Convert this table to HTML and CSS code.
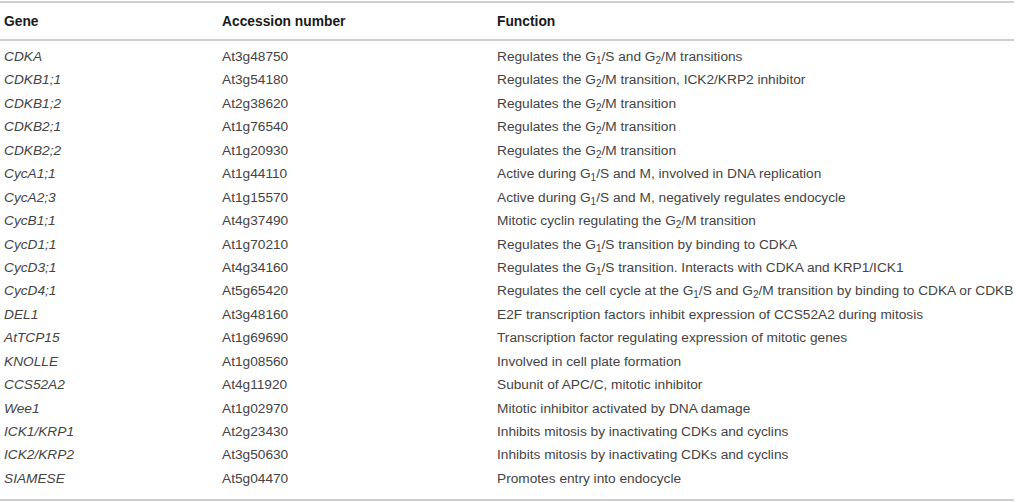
FILE: index.html
```html
<!DOCTYPE html>
<html>
<head>
<meta charset="utf-8">
<link rel="stylesheet" href="styles.css">
</head>
<body>
<table class="genes">
  <thead>
    <tr><th class="c1">Gene</th><th class="c2">Accession number</th><th class="c3">Function</th></tr>
  </thead>
  <tbody>
    <tr class="first"><td class="gene">CDKA</td><td>At3g48750</td><td>Regulates the G<sub>1</sub>/S and G<sub>2</sub>/M transitions</td></tr>
    <tr><td class="gene">CDKB1;1</td><td>At3g54180</td><td>Regulates the G<sub>2</sub>/M transition, ICK2/KRP2 inhibitor</td></tr>
    <tr><td class="gene">CDKB1;2</td><td>At2g38620</td><td>Regulates the G<sub>2</sub>/M transition</td></tr>
    <tr><td class="gene">CDKB2;1</td><td>At1g76540</td><td>Regulates the G<sub>2</sub>/M transition</td></tr>
    <tr><td class="gene">CDKB2;2</td><td>At1g20930</td><td>Regulates the G<sub>2</sub>/M transition</td></tr>
    <tr><td class="gene">CycA1;1</td><td>At1g44110</td><td>Active during G<sub>1</sub>/S and M, involved in DNA replication</td></tr>
    <tr><td class="gene">CycA2;3</td><td>At1g15570</td><td>Active during G<sub>1</sub>/S and M, negatively regulates endocycle</td></tr>
    <tr><td class="gene">CycB1;1</td><td>At4g37490</td><td>Mitotic cyclin regulating the G<sub>2</sub>/M transition</td></tr>
    <tr><td class="gene">CycD1;1</td><td>At1g70210</td><td>Regulates the G<sub>1</sub>/S transition by binding to CDKA</td></tr>
    <tr><td class="gene">CycD3;1</td><td>At4g34160</td><td>Regulates the G<sub>1</sub>/S transition. Interacts with CDKA and KRP1/ICK1</td></tr>
    <tr><td class="gene">CycD4;1</td><td>At5g65420</td><td>Regulates the cell cycle at the G<sub>1</sub>/S and G<sub>2</sub>/M transition by binding to CDKA or CDKB</td></tr>
    <tr><td class="gene">DEL1</td><td>At3g48160</td><td>E2F transcription factors inhibit expression of CCS52A2 during mitosis</td></tr>
    <tr><td class="gene">AtTCP15</td><td>At1g69690</td><td>Transcription factor regulating expression of mitotic genes</td></tr>
    <tr><td class="gene">KNOLLE</td><td>At1g08560</td><td>Involved in cell plate formation</td></tr>
    <tr><td class="gene">CCS52A2</td><td>At4g11920</td><td>Subunit of APC/C, mitotic inhibitor</td></tr>
    <tr><td class="gene">Wee1</td><td>At1g02970</td><td>Mitotic inhibitor activated by DNA damage</td></tr>
    <tr><td class="gene">ICK1/KRP1</td><td>At2g23430</td><td>Inhibits mitosis by inactivating CDKs and cyclins</td></tr>
    <tr><td class="gene">ICK2/KRP2</td><td>At3g50630</td><td>Inhibits mitosis by inactivating CDKs and cyclins</td></tr>
    <tr class="last"><td class="gene">SIAMESE</td><td>At5g04470</td><td>Promotes entry into endocycle</td></tr>
  </tbody>
</table>
</body>
</html>
```
FILE: styles.css
```css
html, body {
  margin: 0;
  padding: 0;
  background: #fff;
}
body {
  padding-top: 1px;
}
.genes {
  width: 1014px;
  border-collapse: collapse;
  font-family: "Liberation Sans", Arial, sans-serif;
  font-size: 13.7px;
  color: #444;
  border-top: 2px solid #cfcfcf;
  border-bottom: 2px solid #cfcfcf;
}
.genes th {
  text-align: left;
  font-weight: bold;
  color: #1a1a1a;
  font-size: 13.8px;
  height: 36px;
  padding: 0 0 0 4px;
  border-bottom: 2px solid #cfcfcf;
  vertical-align: middle;
}
.genes .c1 { width: 214px; }
.genes .c2 { width: 271px; padding-left: 4px; }
.genes td {
  padding: 0 0 0 4px;
  height: 23.44px;
  line-height: 23.44px;
  white-space: nowrap;
  vertical-align: middle;
}
.genes td.gene { font-style: italic; }
.genes tr.first td { padding-top: 4px; }
.genes tr.last td { padding-bottom: 9px; }
.genes sub {
  font-size: 10px;
  line-height: 0;
  vertical-align: -3px;
}
```
